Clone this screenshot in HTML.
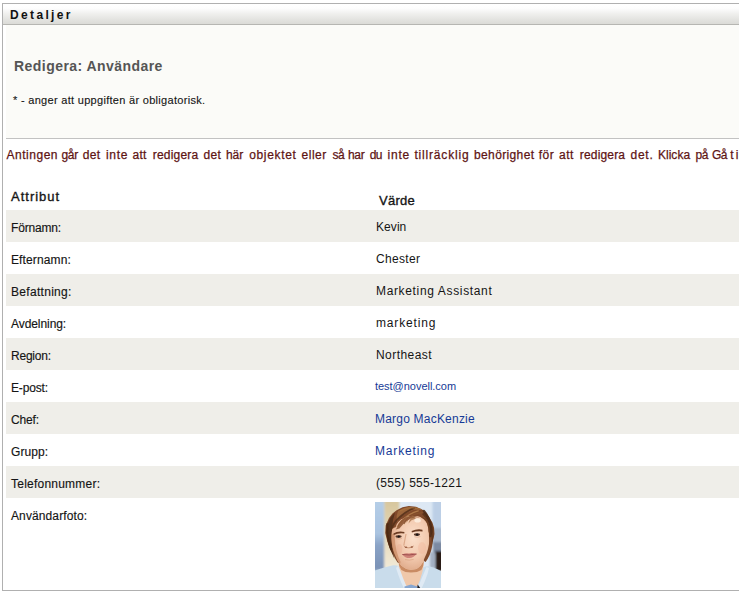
<!DOCTYPE html>
<html lang="sv">
<head>
<meta charset="utf-8">
<title>Detaljer</title>
<style>
html,body{margin:0;padding:0;background:#fff;}
body{width:739px;height:594px;overflow:hidden;position:relative;font-family:"Liberation Sans","DejaVu Sans",sans-serif;color:#111;}
#portlet{position:absolute;left:2px;top:3px;width:760px;height:586px;border:1px solid #b0b0b0;background:#fff;}
#hdr{position:absolute;left:3px;top:4px;width:760px;height:20px;background:linear-gradient(#ffffff 0%,#fdfdfd 22%,#efefed 50%,#e3e3e0 78%,#dbdbd7 100%);border-bottom:1px solid #b6b6b2;}
#top{position:absolute;left:6px;top:25px;width:760px;height:113px;background:#fbfbf8;border-bottom:1px solid #c2c2c2;}
.g{position:absolute;left:6px;width:760px;height:32px;background:#efeee9;}
 #msg{-webkit-text-stroke:0.25px #5e1414;position:absolute;left:0;top:147px;width:739px;height:16px;font-size:12px;line-height:16px;color:#5e1414;white-space:nowrap;}
#msg span{position:absolute;top:0;}
.t{position:absolute;white-space:nowrap;line-height:16px;margin:0;padding:0;}

</style>
</head>
<body>
<div id="portlet"></div>
<div id="hdr"></div>
<div id="top"></div>
<div class="g" style="top:210px"></div>
<div class="g" style="top:274px"></div>
<div class="g" style="top:338px"></div>
<div class="g" style="top:402px"></div>
<div class="g" style="top:466px"></div>
<div id="msg"><span style="left:6.4px;letter-spacing:0.54px">Antingen</span> <span style="left:61.4px;letter-spacing:-0.3px">går</span> <span style="left:82.7px;letter-spacing:0.35px">det</span> <span style="left:106.0px;letter-spacing:0.67px">inte</span> <span style="left:132.5px;letter-spacing:0.25px">att</span> <span style="left:152.8px;letter-spacing:0.19px">redigera</span> <span style="left:203.5px;letter-spacing:0.3px">det</span> <span style="left:226.1px;letter-spacing:-0.15px">här</span> <span style="left:249.2px;letter-spacing:0.66px">objektet</span> <span style="left:301.6px;letter-spacing:0.5px">eller</span> <span style="left:332.5px;letter-spacing:-0.6px">så</span> <span style="left:348.0px;letter-spacing:-0.3px">har</span> <span style="left:369.7px;letter-spacing:-0.5px">du</span> <span style="left:387.5px;letter-spacing:0.8px">inte</span> <span style="left:414.4px;letter-spacing:0.83px">tillräcklig</span> <span style="left:474.0px;letter-spacing:0.37px">behörighet</span> <span style="left:538.8px;letter-spacing:0.45px">för</span> <span style="left:559.0px;letter-spacing:0.5px">att</span> <span style="left:579.8px;letter-spacing:0.17px">redigera</span> <span style="left:630.6px;letter-spacing:0.7px">det.</span> <span style="left:657.9px;letter-spacing:0.04px">Klicka</span> <span style="left:695.6px;letter-spacing:-0.6px">på</span> <span style="left:712.1px;letter-spacing:-0.8px">Gå</span> <span style="left:730.3px;letter-spacing:2.2px">till</span></div>
<span class="t" id="hd" style="left:10px;top:7px;font-size:12px;font-weight:bold;color:#111;letter-spacing:2.35px;">Detaljer</span>
<h1 class="t" id="h1" style="left:14px;top:58px;font-size:14px;font-weight:bold;color:#555;letter-spacing:0.45px;">Redigera: Användare</h1>
<div class="t" id="note" style="left:13px;top:92px;font-size:11px;font-weight:normal;color:#151515;letter-spacing:0.3px;-webkit-text-stroke:0.12px #151515;">* - anger att uppgiften är obligatorisk.</div>
<div class="t" id="th1" style="left:11px;top:189px;font-size:13px;font-weight:normal;color:#151515;letter-spacing:1.0px;-webkit-text-stroke:0.35px #151515;">Attribut</div>
<div class="t" id="th2" style="left:379px;top:193px;font-size:13px;font-weight:normal;color:#151515;letter-spacing:0.27px;-webkit-text-stroke:0.35px #151515;">Värde</div>
<div class="t" id="l0" style="left:11px;top:220px;font-size:12px;font-weight:normal;color:#151515;letter-spacing:-0.18px;-webkit-text-stroke:0.15px #151515;">Förnamn:</div>
<div class="t" id="l1" style="left:11px;top:252px;font-size:12px;font-weight:normal;color:#151515;letter-spacing:0.12000000000000001px;-webkit-text-stroke:0.15px #151515;">Efternamn:</div>
<div class="t" id="l2" style="left:11px;top:284px;font-size:12px;font-weight:normal;color:#151515;letter-spacing:0.30000000000000004px;-webkit-text-stroke:0.15px #151515;">Befattning:</div>
<div class="t" id="l3" style="left:11px;top:316px;font-size:12px;font-weight:normal;color:#151515;letter-spacing:-0.07px;-webkit-text-stroke:0.15px #151515;">Avdelning:</div>
<div class="t" id="l4" style="left:11px;top:348px;font-size:12px;font-weight:normal;color:#151515;letter-spacing:-0.23px;-webkit-text-stroke:0.15px #151515;">Region:</div>
<div class="t" id="l5" style="left:11px;top:380px;font-size:12px;font-weight:normal;color:#151515;letter-spacing:-0.17px;-webkit-text-stroke:0.15px #151515;">E-post:</div>
<div class="t" id="l6" style="left:11px;top:412px;font-size:12px;font-weight:normal;color:#151515;letter-spacing:-0.17px;-webkit-text-stroke:0.15px #151515;">Chef:</div>
<div class="t" id="l7" style="left:11px;top:444px;font-size:12px;font-weight:normal;color:#151515;letter-spacing:0.06px;-webkit-text-stroke:0.15px #151515;">Grupp:</div>
<div class="t" id="l8" style="left:11px;top:476px;font-size:12px;font-weight:normal;color:#151515;letter-spacing:0.23px;-webkit-text-stroke:0.15px #151515;">Telefonnummer:</div>
<div class="t" id="l9" style="left:11px;top:508px;font-size:12px;font-weight:normal;color:#151515;letter-spacing:0.11px;-webkit-text-stroke:0.15px #151515;">Användarfoto:</div>
<div class="t" id="v0" style="left:376px;top:219px;font-size:12px;font-weight:normal;color:#151515;letter-spacing:0.07px;">Kevin</div>
<div class="t" id="v1" style="left:376px;top:251px;font-size:12px;font-weight:normal;color:#151515;letter-spacing:0.34px;">Chester</div>
<div class="t" id="v2" style="left:376px;top:283px;font-size:12px;font-weight:normal;color:#151515;letter-spacing:0.6499999999999999px;">Marketing Assistant</div>
<div class="t" id="v3" style="left:376px;top:315px;font-size:12px;font-weight:normal;color:#151515;letter-spacing:0.83px;">marketing</div>
<div class="t" id="v4" style="left:376px;top:347px;font-size:12px;font-weight:normal;color:#151515;letter-spacing:0.45000000000000007px;">Northeast</div>
<div class="t" id="v5" style="left:375px;top:378px;font-size:11px;font-weight:normal;color:#163a96;letter-spacing:-0.03px;">test@novell.com</div>
<div class="t" id="v6" style="left:375px;top:411px;font-size:12px;font-weight:normal;color:#163a96;letter-spacing:0.21px;">Margo MacKenzie</div>
<div class="t" id="v7" style="left:375px;top:443px;font-size:12px;font-weight:normal;color:#163a96;letter-spacing:0.83px;">Marketing</div>
<div class="t" id="v8" style="left:376px;top:475px;font-size:12px;font-weight:normal;color:#151515;letter-spacing:0.3px;">(555) 555-1221</div>
<svg id="photo" width="66" height="86" viewBox="0 0 66 86" style="position:absolute;left:375px;top:502px;overflow:hidden">
<defs>
<filter id="b1" x="-20%" y="-20%" width="140%" height="140%"><feGaussianBlur stdDeviation="0.7"/></filter>
<filter id="b2" x="-20%" y="-20%" width="140%" height="140%"><feGaussianBlur stdDeviation="1.3"/></filter>
<filter id="b0" x="-20%" y="-20%" width="140%" height="140%"><feGaussianBlur stdDeviation="0.45"/></filter>
<linearGradient id="lstrip" x1="0" y1="0" x2="0" y2="1"><stop offset="0" stop-color="#b6cfe8"/><stop offset="0.38" stop-color="#a9c3e0"/><stop offset="0.5" stop-color="#8aa3c6"/><stop offset="0.76" stop-color="#7a92b6"/><stop offset="0.8" stop-color="#c8dcea"/></linearGradient>
<linearGradient id="beige" x1="0" y1="0" x2="0" y2="1"><stop offset="0" stop-color="#d6c59c"/><stop offset="0.4" stop-color="#e2d4b0"/><stop offset="1" stop-color="#f2ead8"/></linearGradient>
<radialGradient id="skin" cx="0.58" cy="0.4" r="0.64"><stop offset="0" stop-color="#fbe0cc"/><stop offset="0.6" stop-color="#f2c9ae"/><stop offset="1" stop-color="#dfaa8a"/></radialGradient>
<clipPath id="pc"><rect x="0" y="0" width="66" height="86"/></clipPath>
</defs>
<g clip-path="url(#pc)">
<rect x="0" y="0" width="66" height="86" fill="#dde8f4"/>
<g filter="url(#b2)">
<rect x="-3" y="-3" width="12.5" height="92" fill="url(#lstrip)"/>
<rect x="9.3" y="-3" width="15" height="70" fill="url(#beige)"/>
<rect x="57.5" y="-3" width="12" height="30" fill="#bccfe6"/>
<rect x="57" y="26" width="12" height="16" fill="#aab9ce"/>
<rect x="58" y="40" width="11" height="12" fill="#7c8aa2"/>
<rect x="60.4" y="49" width="9" height="20" fill="#2a1c18"/>
<rect x="55" y="50" width="5" height="16" fill="#a4b0c2"/>
</g>
<g filter="url(#b1)">
<path d="M-3 70 L0 68.6 L6 66.6 L12 64.8 L18.3 63.3 L22 63.6 L26 66 L46 66 L50.5 64.6 L53.8 64.3 L58 65.6 L62 67 L66 69 L69 70 L69 90 L-3 90 Z" fill="#c9dceb"/>
<path d="M23.5 58 L49 58 L48.6 63 L47.4 70 L45 78 L42.5 83.7 L42.5 87 L29.4 87 L29.4 83.7 L27 78 L24.8 70 L23.8 63 Z" fill="#f0c8aa"/>
<path d="M23.6 60 L26.5 63.8 L29 65.6 L31.5 67 L36 67.8 L41.5 67 L43.5 65.6 L45.5 63.8 L48.8 59 L48.2 64 L46.4 68 L42 70 L36 70.6 L30.5 70 L26.4 68 L24.2 64 Z" fill="#c4845c" opacity="0.9"/>
<path d="M23 64 L25.5 69 L28 76 L30.5 82 L32.5 86.5 L29 86.5 L26 80 L23 72 L21 66 Z" fill="#dfeaf4"/>
<path d="M51.5 65 L49 71 L46 78 L43.6 84 L43 86.5 L46.5 86.5 L49.5 80 L52.5 72 L54 66 Z" fill="#dfeaf4"/>
<path d="M29.5 84.5 L36 82.6 L42.3 84.5 L42.3 88 L29.5 88 Z" fill="#86a6d0"/>
<path d="M42.6 82.4 L45.6 86.6 L42.2 87 Z" fill="#1a1a22"/>
</g>
<g filter="url(#b1)">
<path d="M14.5 46 L12.1 38.6 L10.2 31 L10.7 23.5 L14 15.9 L17.5 11.5 L21.6 8.3 L27.5 5.3 L33.9 4.1 L41 4.8 L47.2 7.4 L51.5 11.2 L54.7 15.9 L57.4 20.5 L59 25.4 L59.5 32 L58.6 36 L57.6 40 L57.2 44 L56.2 48.5 L54.6 53 L52.6 57 L50.6 60 L49 59 L40 40 L30 45 L24.4 61 L22.6 60.5 L20.4 57 L18.4 53 L16.4 49.5 Z" fill="#80492a"/>
<path d="M11.5 30 L12.5 22 L15.5 15.5 L20 10.5 L18 18 L17 27 L16.6 38 L17.4 48 L19.5 57 L15.5 48 L12.6 39 Z" fill="#57301a"/>
<path d="M50 10 L54 15 L57 21 L58.4 27 L58.6 34 L57 43 L56.4 33 L54.5 24 L51.5 17 L47 12 Z" fill="#5e351c"/>
<path d="M23 9 L28 6.4 L34 5.2 L40 5.6 L45 7.6 L38 8 L31.5 11 L26 14.6 L22 20 L21.6 14 Z" fill="#a06a3e" opacity="0.85"/>
</g>
<g filter="url(#b1)">
<path d="M17.3 27 L19 25.8 L20.6 25.2 L21.8 22 L23.5 19.7 L26 17.5 L29.2 15.9 L33 14.6 L37.7 14 L42 14.1 L45.3 15 L48.4 17 L51 19.7 L52.6 23 L53.4 26.5 L53.9 32 L54.1 38 L54 42 L53 47 L51.6 51.5 L50 55 L48.5 58.5 L47 61.5 L45.5 63.8 L43.5 65.6 L41.5 67 L39 67.6 L36 67.8 L33.6 67.5 L31.5 67 L29 65.6 L26.5 63.8 L24.5 61.5 L22.5 58.5 L21 55 L19.5 51.5 L18 47 L17 42 L16.5 35.8 L16.6 31 Z" fill="url(#skin)"/>
<path d="M16.6 32 L16.5 38 L17 43 L18 47.5 L19.5 52 L21 55.5 L23 59.5 L25 62 L25.6 60 L23.4 55 L21.6 49 L20.2 42 L19.6 32 Z" fill="#c98a64" opacity="0.7"/>
</g>
<g filter="url(#b0)" fill="none" stroke-linecap="round">
<path d="M39.1 6.1 Q29.4 9.6 21.2 18.7 Q18.4 22 17 25.4" stroke="#54301a" stroke-width="2" opacity="0.85"/>
<path d="M43.2 8.9 Q34.2 11.2 26.9 18.7 Q24 21.6 22.3 24.8" stroke="#b47e4c" stroke-width="1.4" opacity="0.9"/>
<path d="M47.2 10.6 Q39.1 11.4 32.6 16.2 Q30.4 18.6 29.2 21.4" stroke="#8a5430" stroke-width="1.4" opacity="0.8"/>
<path d="M48.8 8.9 Q53.7 14.2 55.7 24.4 Q56.6 29 55.5 34" stroke="#4e2a14" stroke-width="2.4" opacity="0.85"/>
<path d="M25.3 8.9 Q31 5.8 35.9 5.7 Q41 5.6 45.6 7.3" stroke="#a8703c" stroke-width="1.3" opacity="0.8"/>
<path d="M12.4 22 Q11.4 30 13.4 38 Q14.6 43 16.2 47" stroke="#4a2812" stroke-width="2.2" opacity="0.8"/>
<path d="M33 14.6 Q28 17.4 25.6 22.4" stroke="#c89a68" stroke-width="0.9" opacity="0.85"/>
<path d="M37 14 Q33 16.6 31.4 20" stroke="#a87444" stroke-width="0.9" opacity="0.8"/>
</g>
<g filter="url(#b0)">
<path d="M30 15.6 L26 18.4 L23.4 22 L22.2 25.6 L20.6 27.6 L24.4 26.4 L27.5 23 L31 19.2 L36 16.4 L40.5 15.2 L45 15.4 L38 13.4 Z" fill="#8a5230" opacity="0.85"/>
<path d="M38 14.6 L35 17.4 L33.4 21.5 L36.5 18.2 L41.5 16.6 Z" fill="#9a6238" opacity="0.7"/>
<path d="M46 15.2 L49.6 17.2 L52 21 L53.2 26 L53.6 31 L54.8 26 L53.6 20.5 L51 16.6 Z" fill="#6d3e20" opacity="0.9"/>
<ellipse cx="42.6" cy="18.4" rx="3.2" ry="2.1" fill="#fdeee0" opacity="0.9"/>
<path d="M18.4 31.6 Q23 28.6 29.4 30 L29.3 31.5 Q23.5 30.6 18.8 33 Z" fill="#6b3a20"/>
<path d="M36.6 29 Q42 26.6 47.4 27.7 L47.6 29.4 Q42 28.6 36.9 30.6 Z" fill="#6b3a20"/>
<ellipse cx="23.6" cy="34.5" rx="3.1" ry="1.3" fill="#5a3a2c"/>
<ellipse cx="42" cy="32.6" rx="3.1" ry="1.3" fill="#5a3a2c"/>
<ellipse cx="23.8" cy="34.6" rx="1.25" ry="1.15" fill="#1c1518"/>
<ellipse cx="42.2" cy="32.7" rx="1.25" ry="1.15" fill="#1c1518"/>
<path d="M21 36.6 Q24 37.6 27 36.4" fill="none" stroke="#d9a68a" stroke-width="0.8" opacity="0.8"/>
<path d="M39.4 34.8 Q42.4 35.8 45.4 34.6" fill="none" stroke="#d9a68a" stroke-width="0.8" opacity="0.8"/>
<path d="M31 32 Q29.6 39 28.8 43.6" fill="none" stroke="#d39a78" stroke-width="1.2" opacity="0.7"/>
<path d="M29 44.2 Q30 46 33.6 45.8 Q37 46 38.6 44" fill="none" stroke="#b87c5c" stroke-width="1" opacity="0.75"/>
<ellipse cx="31" cy="45.2" rx="1.2" ry="0.65" fill="#8f5238"/>
<ellipse cx="36.8" cy="45" rx="1.2" ry="0.65" fill="#8f5238"/>
<path d="M27.3 52.4 Q31 50.6 34 51.5 Q37 50.5 41.6 51.9 Q38 56.2 34.3 56 Q30 56 27.3 52.4 Z" fill="#cf8278"/>
<path d="M27.3 52.5 Q34 53.6 41.6 52" fill="none" stroke="#99484a" stroke-width="0.9"/>
<path d="M30 57.6 Q34.4 58.8 38.6 57.4" fill="none" stroke="#d9a080" stroke-width="0.9" opacity="0.7"/>
<ellipse cx="47" cy="46" rx="4" ry="6" fill="#f0b49c" opacity="0.4"/>
<ellipse cx="24.4" cy="47" rx="3" ry="5" fill="#e8ac92" opacity="0.4"/>
</g>
</g>
</svg>
</body>
</html>
